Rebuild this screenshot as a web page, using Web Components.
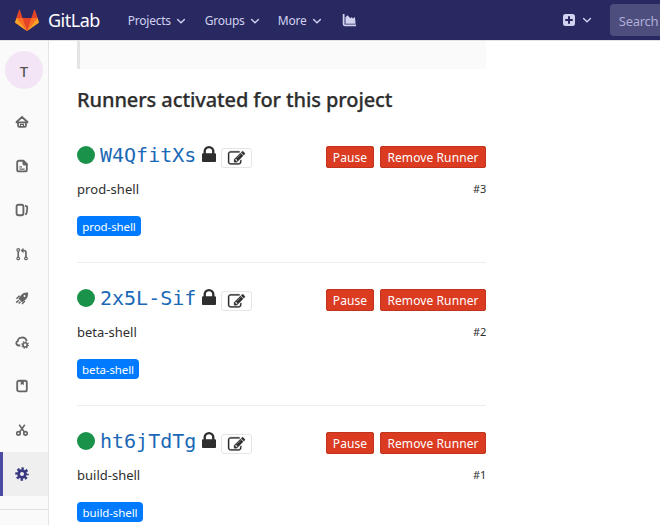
<!DOCTYPE html>
<html lang="en">
<head>
<meta charset="utf-8">
<title>Runners · GitLab</title>
<style>
html,body{margin:0;height:100%;overflow:hidden;background:#fff}
body{font-family:"Noto Sans","Liberation Sans",sans-serif;font-size:13px;color:#2e2e2e}
</style>
</head>
<body>
<app-shell>
  <top-bar slot="header"></top-bar>
  <side-bar slot="nav"></side-bar>
  <runner-list>
    <runner-item token="W4QfitXs" number="3" name="prod-shell" style="--name-ls:.07px;--tag-w:64px"></runner-item>
    <runner-item token="2x5L-Sif" number="2" name="beta-shell" style="--tag-w:62px"></runner-item>
    <runner-item token="ht6jTdTg" number="1" name="build-shell" style="--tag-w:66px"></runner-item>
  </runner-list>
</app-shell>
<script>
const ICONS = {
  home: '<path d="M1.700 8 8 2.300l6.300 5.700M3.500 8v4.200a1.300 1.300 0 0 0 1.300 1.300h6.400a1.300 1.300 0 0 0 1.300-1.300V8M.8 8.400h14.400" fill="none" stroke="currentColor" stroke-width="2"/><path d="M6.300 13V10.700h3.400V13" fill="none" stroke="currentColor" stroke-width="1.400"/>',
  doc: '<path d="M9.500 2H4.500a2 2 0 0 0-2 2v8.200a2 2 0 0 0 2 2h7a2 2 0 0 0 2-2V6z" fill="none" stroke="currentColor" stroke-width="2.100"/><path d="M8.500 1.500h1.700L14.300 5.500V7.500H11a2.500 2.500 0 0 1-2.500-2.500z" fill="currentColor"/><path d="M5 9h3M5 11.500h6" stroke="currentColor" stroke-width="1.300"/>',
  issues: '<rect x="1.800" y="2" width="7.800" height="12" rx="2" fill="none" stroke="currentColor" stroke-width="2.100"/><path d="M11.500 2.900c2 .3 2.700 1 2.500 2.800l-.6 5.300c-.2 1.500-.7 2-1.900 2" fill="none" stroke="currentColor" stroke-width="2"/>',
  merge: '<g fill="none" stroke="currentColor" stroke-width="1.400"><circle cx="3.700" cy="3.400" r="1.500"/><circle cx="3.700" cy="13" r="1.500"/><circle cx="12.500" cy="13" r="1.500"/></g><path d="M3.700 5v6.500M12.500 11.500V6.300c0-1.500-.8-2.300-2.300-2.300H8.500" fill="none" stroke="currentColor" stroke-width="1.900"/><path d="M6.500 4 9.700.8v6.400z" fill="currentColor"/>',
  rocket: '<path fill="currentColor" fill-rule="evenodd" d="M14.900 1.700c-3.800-.3-6.600.8-8.800 3.900L3.900 8.800l4 4 3.400-2.300c3-2.200 3.900-4.900 3.600-8.800zM10.900 4.600a1.100 1.100 0 1 0 0 2.200 1.100 1.100 0 0 0 0-2.200z"/><path d="M5.200 5.400 1.700 8.800M11.300 11.500l-3.300 3.300M4.300 10.500l-3 2.800M6.200 12.200l-2 2" stroke="currentColor" stroke-width="1.700"/>',
  cloud: '<path d="M6 12H4.400C2.700 12 1.500 10.700 1.500 9.200c0-1.300.9-2.200 1.800-2.500C3.300 4.300 5.300 2.700 8 3c2.300-.5 4.800 1 5.400 3.700" fill="none" stroke="currentColor" stroke-width="2.100"/><g fill="none" stroke="currentColor"><circle cx="11.500" cy="11.300" r="2.400" stroke-width="1.900"/><circle cx="11.500" cy="11.300" r="3.700" stroke-width="1.500" stroke-dasharray="1.450"/></g>',
  package: '<rect x="2.500" y="2" width="11" height="12.200" rx="2" fill="none" stroke="currentColor" stroke-width="2.100"/><path d="M6.500 2h3.600v5L8.300 5.700 6.500 7z" fill="currentColor"/>',
  scissors: '<g fill="none" stroke="currentColor"><circle cx="4" cy="11.800" r="2" stroke-width="1.900"/><circle cx="12" cy="11.800" r="2" stroke-width="1.900"/><path d="M4.800 2 10.700 10.200M11.200 2 5.300 10.200" stroke-width="1.800"/></g>',
  gear: '<circle cx="8" cy="8" r="3.900" fill="none" stroke="currentColor" stroke-width="3.200"/><circle cx="8" cy="8" r="6.200" fill="none" stroke="currentColor" stroke-width="3" stroke-dasharray="2.700 2.170" stroke-dashoffset="1.350"/>',
  chevron: '<path d="m2.500 5.500 5.500 5.200 5.500-5.200" fill="none" stroke="currentColor" stroke-width="2.200" stroke-linecap="round"/>',
  chart: '<path fill="currentColor" d="M.8 1h1.900v11.300H15V14H3a2.200 2.200 0 0 1-2.200-2z"/><path fill="currentColor" d="M3.700 11.400V4.500L6 2.300 8.800 5.500l1.500-1 1.500 1.300 2-1.600.7 7.200z"/>',
  plus: '<path fill="currentColor" fill-rule="evenodd" d="M4.500 2h7A2.500 2.500 0 0 1 14 4.500v7a2.500 2.500 0 0 1-2.500 2.500h-7A2.500 2.500 0 0 1 2 11.500v-7A2.500 2.500 0 0 1 4.500 2zM7 4.200V7H4.200v2H7v2.800h2V9h2.800V7H9V4.200z"/>'
};
const icon = (name, size) => `<svg class="i" width="${size}" height="${size}" viewBox="0 0 16 16">${ICONS[name]}</svg>`;

function define(tag, render) {
  customElements.define(tag, class extends HTMLElement {
    connectedCallback() {
      if (!this.shadowRoot) this.attachShadow({mode: 'open'}).innerHTML =
        '<style>*{box-sizing:border-box}svg{display:block;flex:none;overflow:visible}</style>' + render(this);
    }
  });
}

define('app-shell', () => `<style>
  :host{display:grid;grid-template:40px 485px / 49px 1fr;width:660px;height:525px;overflow:hidden}
  header{grid-column:1/3;position:relative;z-index:1;box-shadow:0 1px 0 #e3e3e3}
  main{padding:0 0 0 28px;overflow:hidden;min-width:0}
  </style><header><slot name="header"></slot></header><slot name="nav"></slot><main><slot></slot></main>`);

define('top-bar', () => `<style>
  :host{display:flex;align-items:center;height:40px;background:#292961;color:#d1d1f0;padding-left:15px;overflow:hidden}
  .word{margin-left:9px;color:#fff;font-size:18px;line-height:40px;letter-spacing:-.5px;width:52px;white-space:nowrap;padding-bottom:1px;font-weight:400}
  nav{display:flex;margin-left:28px;line-height:40px;font-size:12px;white-space:nowrap;letter-spacing:-.25px}
  nav div{display:flex;align-items:center;gap:5px;padding-top:1px}
  .p{width:77px}.g{width:73px}.m{width:64px;letter-spacing:-.2px}
  .chart{margin-top:1px}
  .new{display:flex;align-items:center;gap:5px;margin-left:204px}
  .search{margin-left:18px;flex:none;width:240px;height:32px;border-radius:4px;background:#4d4d7e;line-height:35px;padding-left:9px;color:#aeaed6;font-size:13px;letter-spacing:-.3px}
  </style>
  <svg width="24" height="23" viewBox="0 0 36 36" preserveAspectRatio="none"><path fill="#e24329" d="M2 14l9.380 9v-9l-4-12.280c-.205-.632-1.176-.632-1.380 0zM34 14l-9.380 9v-9l4-12.280c.205-.632 1.176-.632 1.380 0zM18 34.380 3 14h30z"/><path fill="#fc6d26" d="M18 34.380 11.380 14H2l4 11zM18 34.380 24.620 14H34l-4 11z"/><path fill="#fca326" d="M2 14 .1 20.160c-.18.565 0 1.200.5 1.560l17.420 12.660zM34 14l1.900 6.160c.18.565 0 1.200-.5 1.560L18 34.380z"/></svg>
  <div class="word">GitLab</div>
  <nav><div class="p"><span>Projects</span>${icon('chevron',10)}</div><div class="g"><span>Groups</span>${icon('chevron',10)}</div><div class="m"><span>More</span>${icon('chevron',10)}</div></nav>
  <div class="chart">${icon('chart',15)}</div>
  <div class="new">${icon('plus',16)}${icon('chevron',10)}</div>
  <div class="search">Search</div>`);

define('side-bar', () => `<style>
  :host{display:block;height:485px;background:#fafafa;border-right:1px solid #e3e3e3;color:#666;box-sizing:border-box}
  .avatar{margin:11px 0 11px 5px;width:38px;height:38px;border-radius:50%;background:#f3e5f5;color:#555;text-align:center;line-height:41px;font-size:15px;font-weight:500}
  .row{height:44px;display:flex;align-items:center;padding-left:15px}
  .active{background:#efefef;box-shadow:inset 3px 0 #4b4ba3;color:#393982}
  .end{margin-top:13px;border-top:1px solid #e3e3e3}
  </style><div class="avatar">T</div>
  ${['home','doc','issues','merge','rocket','cloud','package','scissors','gear'].map(n =>
    `<div class="row${n === 'gear' ? ' active' : ''}">${icon(n, 14)}</div>`).join('')}
  <div class="end"></div>`);

define('runner-list', () => `<style>
  :host{display:block;width:409px}
  .well{height:29px;background:#fafafa;border-left:3px solid #e5e5e5}
  h4{margin:18px 0 0;height:26px;line-height:26px;font-size:20px;font-weight:500;white-space:nowrap;letter-spacing:-.1px;-webkit-text-stroke:.25px #2e2e2e}
  </style><div class="well"></div><h4>Runners activated for this project</h4><slot></slot>`);

define('danger-button', () => `<style>
  :host{display:block;box-sizing:border-box;height:22px;border:1px solid #c0341d;border-radius:2px;background:#db3b21;color:#fff;text-align:center;line-height:21px;font-size:12px;white-space:nowrap;letter-spacing:.1px}
  </style><slot></slot>`);

define('runner-item', el => `<style>
  :host{display:block;height:143px;padding-top:26px;border-bottom:1px solid #eee;box-sizing:border-box}
  :host(:first-of-type){height:150px;padding-top:33px}
  .top{display:flex;height:22px;align-items:flex-start}
  .dot{width:18px;height:18px;border-radius:50%;background:#1a9249;margin-right:5px}
  .token{font:20px/22px "DejaVu Sans Mono",monospace;color:#1b69b6;width:102px;margin-top:-2px}
  .edit{margin:2px 0 0 5px;width:31px;height:20px;border:1px solid #e5e5e5;border-radius:3px;display:flex;align-items:center;justify-content:center}
  .stop{margin-left:auto;width:48px}.remove{width:106px;margin-left:6px}
  .info{display:flex;justify-content:space-between;align-items:center;height:20px;margin-top:11px;line-height:20px}
  .name{letter-spacing:var(--name-ls,0)}
  small{font-size:11px;letter-spacing:-.2px}
  .tag{margin-top:17px;width:var(--tag-w);height:20px;border-radius:4px;background:#007bff;color:#fff;text-align:center;font-size:11.500px;line-height:21px;letter-spacing:-.1px;white-space:nowrap}
  </style>
  <div class="top"><span class="dot"></span><span class="token">${el.getAttribute('token')}</span>
  <svg width="14" height="16" viewBox="320 128 1152 1408" preserveAspectRatio="none"><path fill="#2e2e2e" d="M640 768h512v-192q0-106-75-181t-181-75-181 75-75 181v192zm832 96v576q0 40-28 68t-68 28h-960q-40 0-68-28t-28-68v-576q0-40 28-68t68-28h32v-192q0-184 132-316t316-132 316 132 132 316v192h32q40 0 68 28t28 68z"/></svg>
  <span class="edit"><svg width="17" height="17" viewBox="0 0 1792 1792"><path fill="#2e2e2e" stroke="#2e2e2e" stroke-width="30" d="M888 1184l116-116-152-152-116 116v56h96v96h56zm440-720q-16-16-33 1l-350 350q-17 17-1 33t33-1l350-350q17-17 1-33zm80 594v190q0 119-84.500 203.500t-203.500 84.500h-832q-119 0-203.500-84.500t-84.500-203.500v-832q0-119 84.500-203.500t203.500-84.500h832q63 0 117 25 15 7 18 23 3 17-9 29l-49 49q-14 14-32 8-23-6-45-6h-832q-66 0-113 47t-47 113v832q0 66 47 113t113 47h832q66 0 113-47t47-113v-126q0-13 9-22l64-64q15-15 35-7t20 29zm-96-738l288 288-672 672h-288v-288zm444 132l-92 92-288-288 92-92q28-28 68-28t68 28l152 152q28 28 28 68t-28 68z"/></svg></span>
  <danger-button class="stop">Pause</danger-button><danger-button class="remove">Remove Runner</danger-button></div>
  <div class="info"><span class="name">${el.getAttribute('name')}</span><small>#${el.getAttribute('number')}</small></div>
  <div class="tag">${el.getAttribute('name')}</div>`);
</script>
</body>
</html>
